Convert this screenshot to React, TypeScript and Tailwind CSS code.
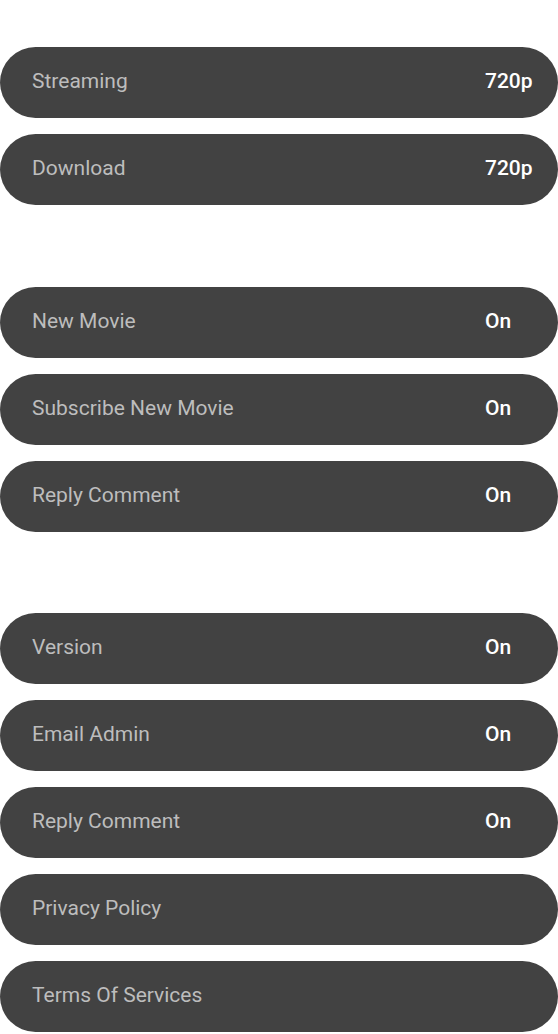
const sections: { space: string; rows: { label: string; value?: string }[] }[] = [
  {
    space: "",
    rows: [
      { label: "Streaming", value: "720p" },
      { label: "Download", value: "720p" },
    ],
  },
  {
    space: "mt-[82px]",
    rows: [
      { label: "New Movie", value: "On" },
      { label: "Subscribe New Movie", value: "On" },
      { label: "Reply Comment", value: "On" },
    ],
  },
  {
    space: "mt-[81px]",
    rows: [
      { label: "Version", value: "On" },
      { label: "Email Admin", value: "On" },
      { label: "Reply Comment", value: "On" },
      { label: "Privacy Policy" },
      { label: "Terms Of Services" },
    ],
  },
]

function Row({ label, value }: { label: string; value?: string }) {
  return (
    <div className="flex h-[71px] items-center rounded-full bg-[#424242] pl-8">
      <span className="flex-1 pb-[2px] text-[21px] text-[#bdbdbd]">{label}</span>
      {value && <span className="w-[73px] pb-[2px] text-[21px] font-medium text-white">{value}</span>}
    </div>
  )
}

export default function App() {
  return (
    <div className="min-h-screen bg-white pt-[47px] font-['Roboto',sans-serif]">
      {sections.map((s, i) => (
        <div key={i} className={`flex flex-col gap-4 ${s.space}`}>
          {s.rows.map((r, j) => (
            <Row key={j} label={r.label} value={r.value} />
          ))}
        </div>
      ))}
    </div>
  )
}
